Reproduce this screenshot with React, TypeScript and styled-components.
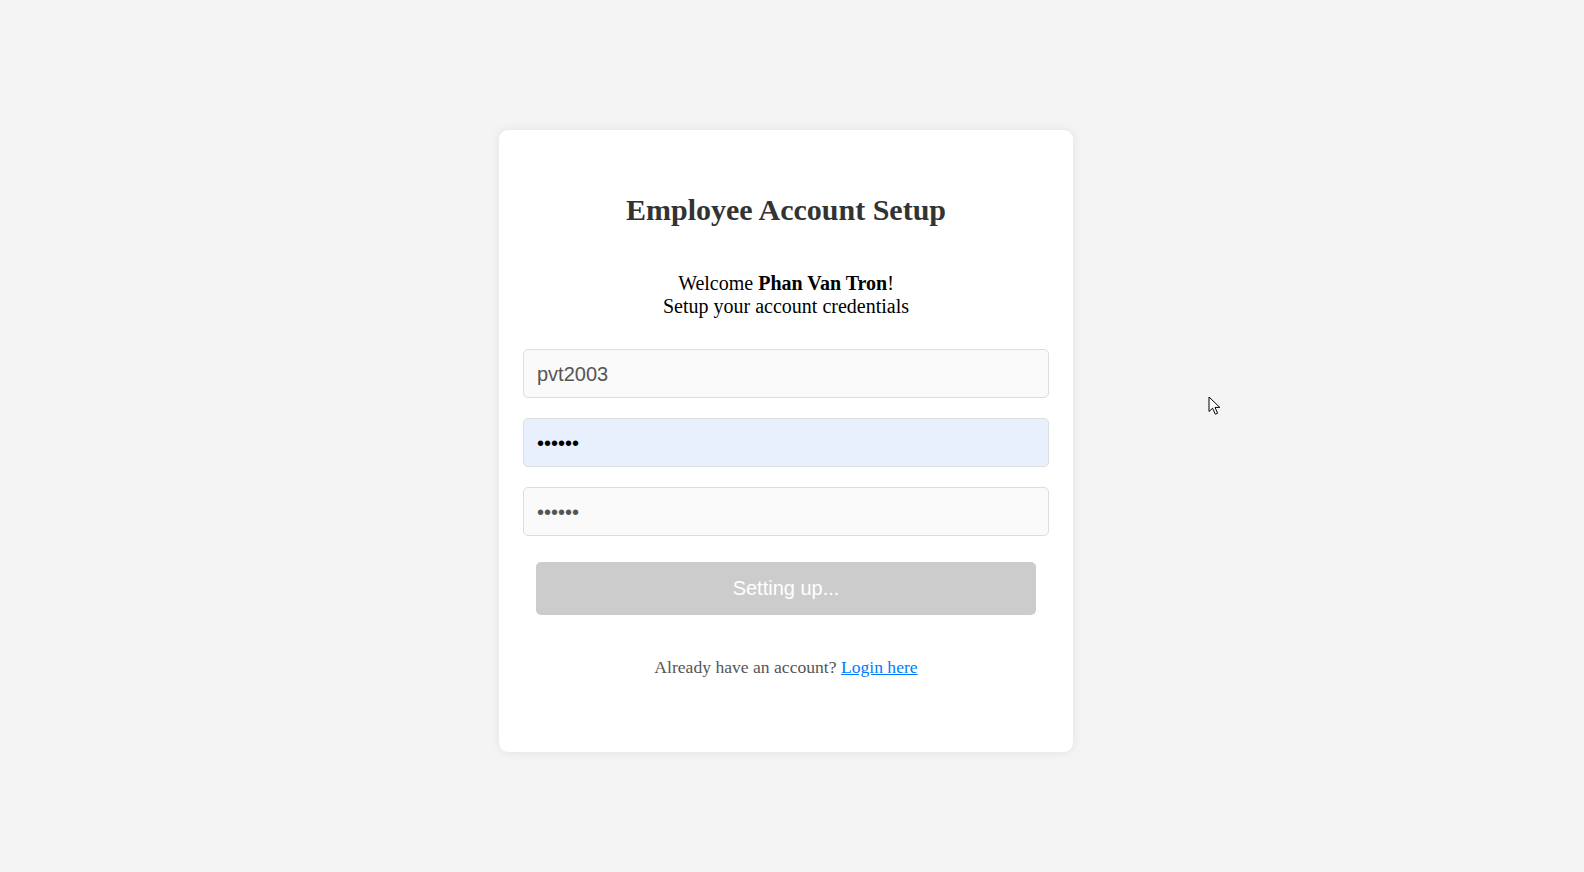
import React from "react";
import styled, { createGlobalStyle } from "styled-components";

const GlobalStyle = createGlobalStyle`
  html, body {
    margin: 0;
    padding: 0;
    background: #f4f4f4;
    font-family: "Liberation Serif", "Times New Roman", serif;
  }
  * { box-sizing: border-box; }
`;

const Page = styled.div`
  position: relative;
  width: 1584px;
  height: 872px;
  display: flex;
  justify-content: center;
  align-items: flex-start;
  padding: 130px 12px 0 0;
  background: #f4f4f4;
`;

const Card = styled.div`
  width: 574px;
  background: #ffffff;
  border-radius: 9px;
  box-shadow: 0 0 10px rgba(0, 0, 0, 0.08);
  padding: 40px 24px 75px;
  display: flex;
  flex-direction: column;
`;

const Title = styled.h1`
  margin: 23px 0 45px;
  font-family: "Liberation Serif", "Times New Roman", serif;
  font-size: 30px;
  line-height: 34px;
  font-weight: 700;
  color: #333;
  text-align: center;
`;

const Welcome = styled.p`
  margin: 0 0 31px;
  font-size: 20px;
  line-height: 23px;
  color: #000;
  text-align: center;
`;

const Form = styled.form`
  display: flex;
  flex-direction: column;
  gap: 20px;
  margin: 0;
`;

const Input = styled.input<{ $autofill?: boolean; $dark?: boolean }>`
  width: 100%;
  height: 49px;
  padding: 12px 12px 11px 13px;
  border: 1px solid #ddd;
  border-radius: 5px;
  background: ${(p) => (p.$autofill ? "#e8f0fe" : "#fafafa")};
  font-family: "Liberation Sans", Arial, sans-serif;
  font-size: 20px;
  color: ${(p) => (p.$dark ? "#000" : "#555")};
  outline: none;
`;

const Button = styled.button`
  align-self: center;
  width: 95%;
  height: 53px;
  margin-top: 6px;
  border: none;
  border-radius: 5px;
  background: #cccccc;
  color: #ffffff;
  font-family: "Liberation Sans", Arial, sans-serif;
  font-size: 20px;
  cursor: not-allowed;
`;

const Footer = styled.p`
  margin: 42px 0 0;
  font-size: 17.6px;
  line-height: 20px;
  color: #555;
  text-align: center;
`;

const Link = styled.a`
  color: #007bff;
  text-decoration: underline;
`;

const Cursor = styled.svg`
  position: absolute;
  left: 1208px;
  top: 396px;
  width: 14px;
  height: 20px;
`;

export default function App() {
  return (
    <>
      <GlobalStyle />
      <Page>
        <Card>
          <Title>Employee Account Setup</Title>
          <Welcome>
            Welcome <strong>Phan Van Tron</strong>!
            <br />
            Setup your account credentials
          </Welcome>
          <Form onSubmit={(e) => e.preventDefault()}>
            <Input type="text" value="pvt2003" readOnly />
            <Input type="password" value="123456" readOnly $autofill $dark />
            <Input type="password" value="123456" readOnly />
            <Button type="submit" disabled>
              Setting up...
            </Button>
          </Form>
          <Footer>
            Already have an account? <Link href="#">Login here</Link>
          </Footer>
        </Card>
        <Cursor viewBox="0 0 14 20">
          <path
            d="M1 1 L1 15.5 L4.6 12.2 L7.3 18.2 L9.6 17.2 L7 11.4 L11.8 11.4 Z"
            fill="#fff"
            stroke="#000"
            strokeWidth="1"
            strokeLinejoin="round"
          />
        </Cursor>
      </Page>
    </>
  );
}
